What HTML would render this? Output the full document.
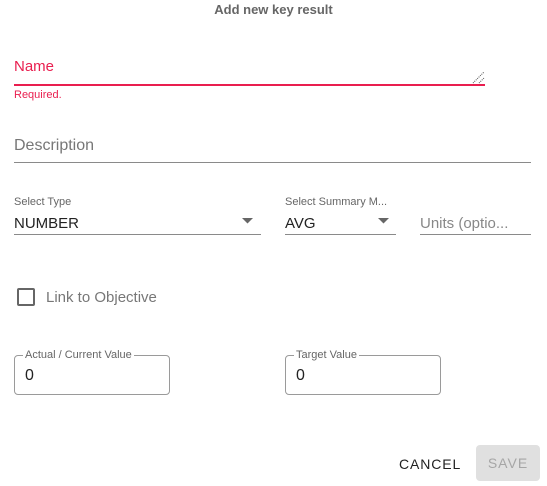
<!DOCTYPE html>
<html><head><style>
body{margin:0;width:547px;height:486px;background:#fff;font-family:"Liberation Sans",Roboto,sans-serif;position:relative;overflow:hidden}
.a{position:absolute;white-space:nowrap}
.line{position:absolute;height:1px;background:#8a8a8a}
.box{position:absolute;border:1px solid #9a9a9a;border-radius:4px;box-sizing:border-box}
.lbl{position:absolute;background:#fff;padding:0 2px;font-size:11px;color:#666;top:-7px;line-height:13px}
</style></head><body>
<div class="a" style="left:0;width:547px;text-align:center;top:2px;font-size:13px;font-weight:bold;color:#666">Add new key result</div>

<div class="a" style="left:14px;top:58px;font-size:15px;color:#e91e4f">Name</div>
<div class="line" style="left:14px;top:84px;width:471px;height:1.5px;background:#e91e4f"></div>
<svg class="a" style="left:472px;top:71px" width="14" height="14"><path d="M1 12 L12 1 M7 12 L12 7" stroke="#555" stroke-width="1" stroke-dasharray="1 1"/></svg>
<div class="a" style="left:14px;top:89px;font-size:11px;color:#e91e4f">Required.</div>

<div class="a" style="left:14px;top:137px;font-size:16px;color:#777">Description</div>
<div class="line" style="left:14px;top:162px;width:517px"></div>

<div class="a" style="left:14px;top:196px;font-size:11px;color:#666">Select Type</div>
<div class="a" style="left:14px;top:215px;font-size:15px;color:#222">NUMBER</div>
<svg class="a" style="left:242px;top:218px" width="12" height="6"><path d="M0 0H11L5.5 5.5Z" fill="#666"/></svg>
<div class="line" style="left:14px;top:234px;width:247px"></div>

<div class="a" style="left:285px;top:196px;font-size:11px;color:#666">Select Summary M...</div>
<div class="a" style="left:285px;top:215px;font-size:15px;color:#222">AVG</div>
<svg class="a" style="left:378px;top:218px" width="12" height="6"><path d="M0 0H11L5.5 5.5Z" fill="#666"/></svg>
<div class="line" style="left:285px;top:234px;width:111px"></div>

<div class="a" style="left:420px;top:215px;font-size:15px;color:#888">Units (optio...</div>
<div class="line" style="left:420px;top:234px;width:111px"></div>

<div class="a" style="left:17px;top:288px;width:14px;height:14px;border:2px solid #666;border-radius:2px"></div>
<div class="a" style="left:46px;top:289px;font-size:15px;color:#777">Link to Objective</div>

<div class="box" style="left:14px;top:355px;width:156px;height:40px"><span class="lbl" style="left:8px">Actual / Current Value</span><span class="a" style="left:10px;top:11px;font-size:16px;color:#222">0</span></div>
<div class="box" style="left:285px;top:355px;width:156px;height:40px"><span class="lbl" style="left:8px">Target Value</span><span class="a" style="left:10px;top:11px;font-size:16px;color:#222">0</span></div>

<div class="a" style="left:399px;top:456px;font-size:14px;letter-spacing:0.9px;color:#222">CANCEL</div>
<div class="a" style="left:476px;top:445px;width:64px;height:36px;background:#e0e0e0;border-radius:4px;text-align:center;line-height:36px;font-size:14px;letter-spacing:1px;color:#a6a6a6">SAVE</div>
</body></html>
